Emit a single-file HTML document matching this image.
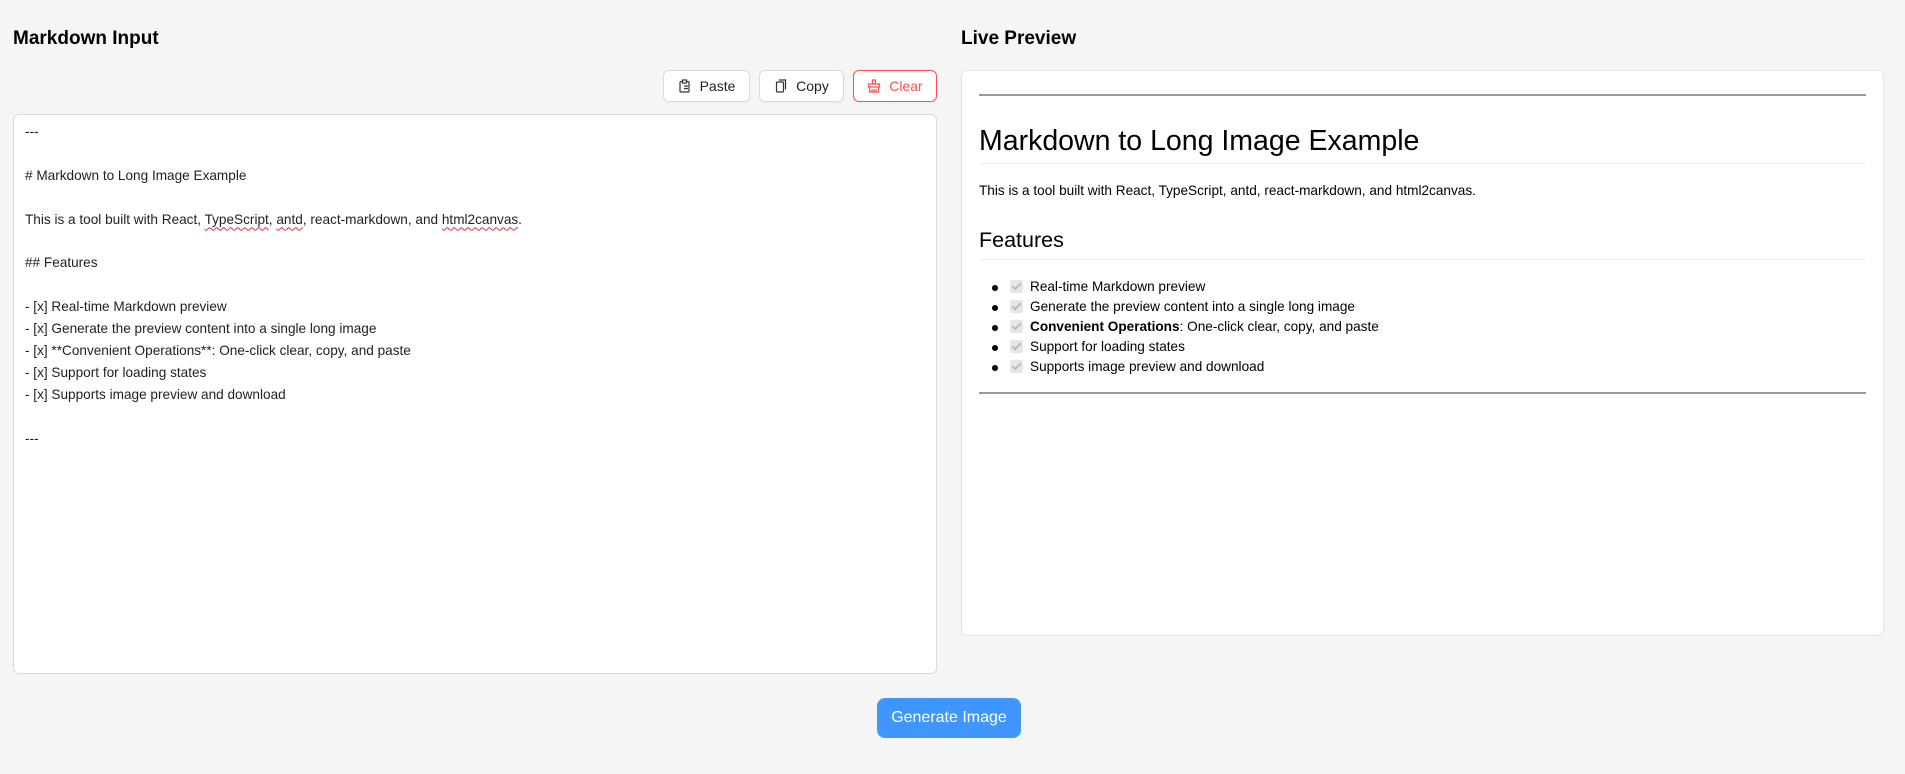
<!DOCTYPE html>
<html><head><meta charset="utf-8"><style>
*{box-sizing:border-box;margin:0;padding:0}
body{width:1905px;height:774px;background:#f5f5f5;font-family:"Liberation Sans",sans-serif;color:#000;position:relative;overflow:hidden}
.t{position:absolute;font-weight:bold;font-size:19px;top:28px}
.btn{position:absolute;top:70px;height:32px;border:1px solid #d9d9d9;border-radius:6px;background:#fff;font-size:14px;display:flex;align-items:center;justify-content:center;gap:8px;color:rgba(0,0,0,.88);box-shadow:0 2px 0 rgba(0,0,0,.02)}
.ta{position:absolute;left:13px;top:114px;width:924px;height:560px;background:#fff;border:1px solid #d9d9d9;border-radius:6px;padding:6px 11px;font-size:13.6px;line-height:21.9px;color:rgba(0,0,0,.88);white-space:pre}
.pv{position:absolute;left:961px;top:70px;width:923px;height:566px;background:#fff;border:1px solid #e3e3e3;border-radius:6px}
.a{position:absolute;left:17px;right:17px}
.hr{height:0;border-top:2px solid #9a9a9a}
.ln{border-top:1px solid #eee}
li{position:absolute;left:51px;font-size:13.6px;list-style:none;white-space:nowrap}
li:before{content:"";position:absolute;left:-38px;top:6px;width:6px;height:6px;border-radius:50%;background:#000}
.cb{position:absolute;left:-20px;top:1px;width:13px;height:13px;background:#e6e6e6;border-radius:2px}
.cb:after{content:"";position:absolute;left:4px;top:1px;width:3px;height:7px;border:solid #bbb;border-width:0 2px 2px 0;transform:rotate(45deg)}
.gen{position:absolute;left:877px;top:698px;width:144px;height:40px;background:#4096ff;color:#fff;border-radius:8px;font-size:16px;display:flex;align-items:center;justify-content:center}
u{text-decoration:underline wavy #e03030;text-decoration-thickness:1px;text-underline-offset:3px}
</style></head><body>
<div class="t" style="left:13px">Markdown Input</div>
<div class="t" style="left:961px">Live Preview</div>
<div class="btn" style="left:663px;width:87px"><svg width="14" height="14" viewBox="0 0 14 14" fill="none" stroke="#333" stroke-width="1.2"><rect x="2" y="2.5" width="9" height="10.5" rx="1"/><rect x="4.5" y="1" width="4" height="3" fill="#fff"/><path d="M6 7h4M6 9.5h4"/></svg>Paste</div>
<div class="btn" style="left:759px;width:85px"><svg width="14" height="14" viewBox="0 0 14 14" fill="none" stroke="#333" stroke-width="1.2"><rect x="2.5" y="3" width="7" height="10" rx="1"/><path d="M5 1h6.5v9.5"/></svg>Copy</div>
<div class="btn" style="left:853px;width:84px;border-color:#ff4d4f;color:#ff4d4f"><svg width="14" height="14" viewBox="0 0 14 14" fill="none" stroke="#ff4d4f" stroke-width="1.2"><path d="M5.5 1h3v4h-3z"/><rect x="1.5" y="5" width="11" height="3"/><path d="M2.5 8v5h9V8M5 10v3M7 10v3M9 10v3"/></svg>Clear</div>
<div class="ta">---

# Markdown to Long Image Example

This is a tool built with React, <u>TypeScript</u>, <u>antd</u>, react-markdown, and <u>html2canvas</u>.

## Features

- [x] Real-time Markdown preview
- [x] Generate the preview content into a single long image
- [x] **Convenient Operations**: One-click clear, copy, and paste
- [x] Support for loading states
- [x] Supports image preview and download

---</div>
<div class="pv">
 <div class="a hr" style="top:23px"></div>
 <div class="a" style="top:52px;font-size:28.5px;font-weight:500;line-height:36px">Markdown to Long Image Example</div>
 <div class="a ln" style="top:92px"></div>
 <div class="a" style="top:112px;font-size:13.6px">This is a tool built with React, TypeScript, antd, react-markdown, and html2canvas.</div>
 <div class="a" style="top:157px;font-size:21.5px;font-weight:500">Features</div>
 <div class="a ln" style="top:188px"></div>
 <ul class="a" style="top:0">
  <li style="top:208px"><span class="cb"></span>Real-time Markdown preview</li>
  <li style="top:228px"><span class="cb"></span>Generate the preview content into a single long image</li>
  <li style="top:248px"><span class="cb"></span><b>Convenient Operations</b>: One-click clear, copy, and paste</li>
  <li style="top:268px"><span class="cb"></span>Support for loading states</li>
  <li style="top:288px"><span class="cb"></span>Supports image preview and download</li>
 </ul>
 <div class="a hr" style="top:321px"></div>
</div>
<div class="gen">Generate Image</div>
</body></html>
